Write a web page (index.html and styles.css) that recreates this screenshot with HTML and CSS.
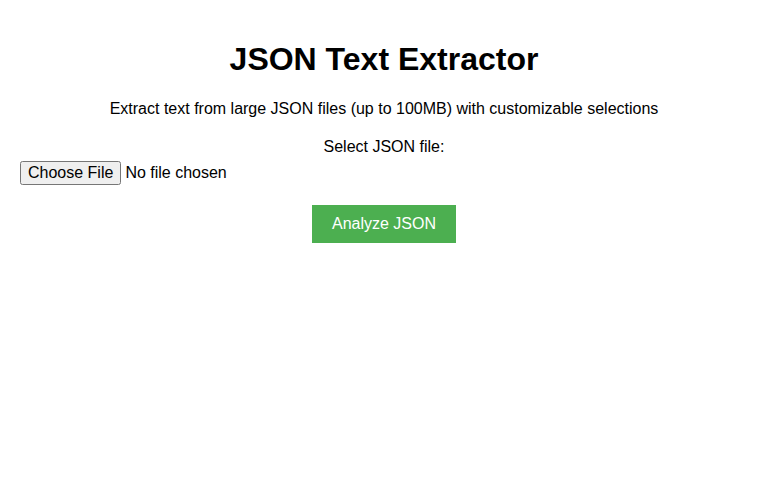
FILE: index.html
```html
<!DOCTYPE html>
<html>
<head>
<meta charset="utf-8">
<title>JSON Text Extractor</title>
<link rel="stylesheet" href="styles.css">
</head>
<body>
<div class="container">
  <h1 class="title">JSON Text Extractor</h1>
  <p class="subtitle">Extract text from large JSON files (up to 100MB) with customizable selections</p>
  <div class="form-group">
    <label class="file-label" for="jsonFile">Select JSON file:</label>
    <input class="file-input" type="file" id="jsonFile" accept=".json">
  </div>
  <div class="actions">
    <button class="analyze-btn" type="button">Analyze JSON</button>
  </div>
</div>
</body>
</html>
```
FILE: styles.css
```css
html, body {
  margin: 0;
  background: #fff;
}
body {
  font-family: "Liberation Sans", Arial, sans-serif;
  color: #000;
  padding: 20px;
}
.container {
  max-width: 800px;
  margin: 0 auto;
}
.title {
  font-size: 32px;
  font-weight: bold;
  text-align: center;
  margin: 21.44px 0;
  line-height: 37px;
}
.subtitle {
  font-size: 16px;
  text-align: center;
  margin: 16px 0;
  line-height: 18px;
}
.form-group {
  margin: 20px 0;
}
.file-label {
  display: block;
  text-align: center;
  margin-bottom: 5px;
  font-size: 16px;
  line-height: 18px;
}
.file-input {
  font-family: "Liberation Sans", Arial, sans-serif;
  font-size: 16px;
}
.actions {
  text-align: center;
}
.analyze-btn {
  background: #4CAF50;
  color: #fff;
  border: none;
  padding: 10px 20px;
  font-family: "Liberation Sans", Arial, sans-serif;
  font-size: 16px;
  line-height: 18px;
  cursor: pointer;
}
```
